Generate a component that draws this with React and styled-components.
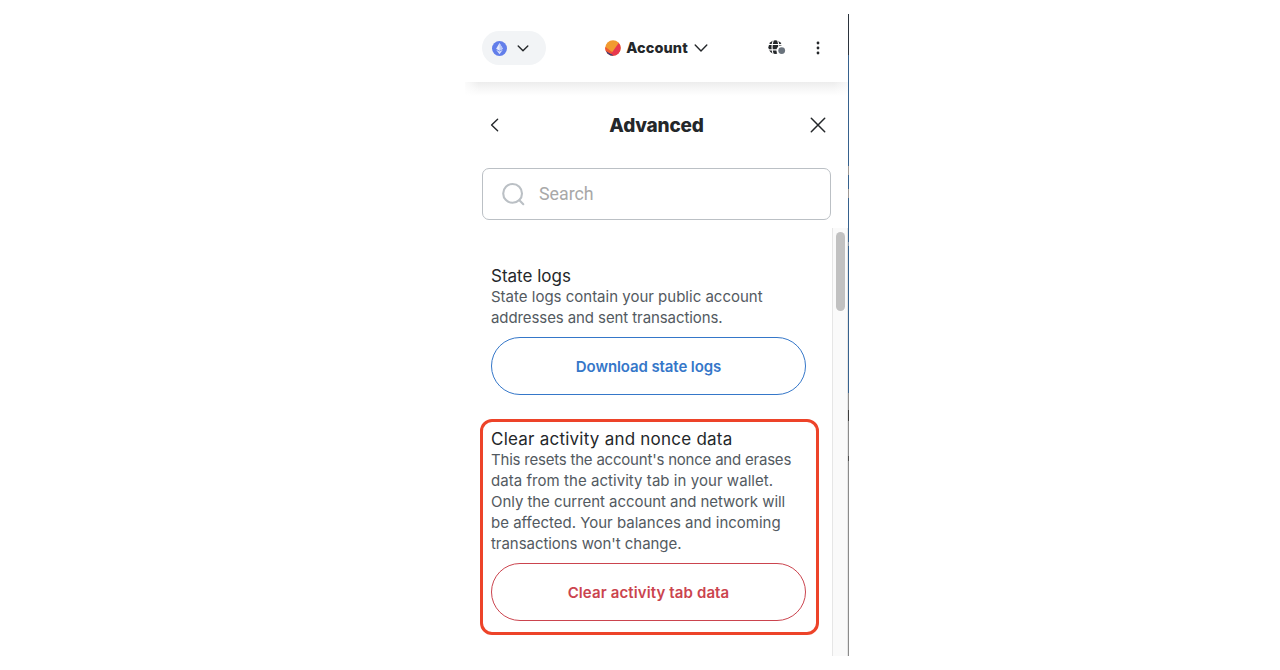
import React from "react";
import styled, { createGlobalStyle } from "styled-components";

const GlobalStyle = createGlobalStyle`
  *, *::before, *::after { box-sizing: border-box; }
  body { margin: 0; background: #fff; font-family: Inter, "Open Sans", sans-serif; color: #24272a; }
  button { font: inherit; color: inherit; background: none; border: 0; padding: 0; display: flex; }
  h1, h2, p { margin: 0; font-weight: 400; }
  svg { display: block; }
`;

const Page = styled.div`
  height: 670px;
  padding: 14px 0 14px 465px;
  overflow: hidden;
`;

const Popup = styled.main`
  display: grid;
  grid-template-columns: 383px 1px;
  height: 642px;
`;

const Wallet = styled.div`
  display: flex;
  flex-direction: column;
  min-height: 0;
`;

const DesktopEdge = styled.div`
  background: linear-gradient(#2b333d 0 41px, #36618d 41px 152px, #a09a96 152px 161px, #36618d 161px 175px, #a09a96 175px 184px, #36618d 184px 228px, #8998a8 228px 232px, #36618d 232px 379px, #8b8b8b 379px 396px, #3d3d3d 396px 407px, #8b8b8b 407px 442px, #4d4d4d 442px 447px, #8b8b8b 447px);
`;

const Header = styled.header`
  flex: none;
  height: 68px;
  padding: 0 17px;
  display: grid;
  grid-template-columns: 64px 1fr 64px;
  align-items: center;
`;

const HeaderShade = styled.div`
  flex: none;
  height: 14px;
  background: linear-gradient(90deg, #fffc 0, rgba(255, 255, 255, 0) 14px, rgba(255, 255, 255, 0) 368px, #fff9 383px), linear-gradient(#ededed, #f7f7f7 50%, #fff);
`;

const NetworkPill = styled.button`
  && {
    width: 64px;
    height: 34px;
    border-radius: 17px;
    background: #f2f4f6;
    align-items: center;
    padding-left: 10px;
    gap: 10px;
  }
`;

const AccountPicker = styled.button`
  && {
    justify-self: center;
    align-items: center;
    gap: 5px;
  }
`;

const AccountName = styled.span`
  font-size: 14.5px;
  line-height: 20px;
  font-weight: 800;
  letter-spacing: 0.1px;
  margin-right: 1px;
`;

const HeaderTools = styled.div`
  display: flex;
  align-items: center;
  justify-content: flex-end;
  gap: 30px;
  padding-right: 11px;
`;

const TitleBar = styled.div`
  flex: none;
  height: 58px;
  padding: 0 22px 0 25px;
  display: flex;
  align-items: center;
  justify-content: space-between;
`;

const Title = styled.h1`
  font-size: 19px;
  line-height: 26px;
  font-weight: 800;
  letter-spacing: -0.2px;
  padding: 2px 0 0 4px;
`;

const SearchBox = styled.label`
  flex: none;
  height: 52px;
  margin: 14px 17px 8px;
  border: 1px solid #bbc0c5;
  border-radius: 7px;
  display: flex;
  align-items: center;
  padding-left: 18px;
  gap: 13px;
`;

const SearchInput = styled.input`
  border: 0;
  outline: 0;
  padding: 0;
  width: 250px;
  background: none;
  font: 400 17.8px/24px Roboto, sans-serif;
  &::placeholder { color: #a8a8a8; opacity: 1; }
`;

const Scroller = styled.div`
  flex: 1;
  min-height: 0;
  display: grid;
  grid-template-columns: 1fr 16px;
`;

const Settings = styled.div`
  padding: 28px 13px 0 15px;
`;

const Track = styled.div`
  background: #fafafa;
  border-left: 1px solid #e6e6e6;
  border-right: 1px solid #e6e6e6;
  padding: 4px 3px 0;
`;

const Thumb = styled.div`
  height: 79px;
  width: 9px;
  border-radius: 5px;
  background: #c1c1c1;
`;

const Section = styled.section`
  border: 3px solid ${(p) => (p.$highlight ? "#ed4329" : "transparent")};
  border-radius: 12px;
  padding: 7px 10px 11px 8px;
  & + & { margin-top: 10px; }
`;

const SectionTitle = styled.h2`
  font-size: 17px;
  line-height: 20px;
  letter-spacing: ${(p) => p.$track}px;
  white-space: nowrap;
`;

const Description = styled.p`
  font-size: 15px;
  line-height: 21px;
  color: #535a61;
  margin-bottom: 9px;
`;

const Line = styled.span`
  display: block;
  white-space: nowrap;
  letter-spacing: ${(p) => p.$track}px;
`;

const OutlineButton = styled.button`
  && {
    width: 315px;
    height: 58px;
    border: 1px solid ${(p) => p.$color};
    border-radius: 29px;
    color: ${(p) => p.$color};
    font-size: 15px;
    font-weight: 600;
    letter-spacing: ${(p) => p.$track}px;
    align-items: center;
    justify-content: center;
  }
`;

const Chevron = ({ w = 14, h = 8, d = "m1.2 1 5.8 6 5.8-6" }) => (
  <svg width={w} height={h} viewBox={`0 0 ${w} ${h}`} fill="none" stroke="#24272a" strokeWidth="1.4" strokeLinecap="round" strokeLinejoin="round">
    <path d={d} />
  </svg>
);

const Ether = () => (
  <svg width="15" height="15" viewBox="0 0 15 15">
    <circle cx="7.5" cy="7.5" r="7.5" fill="#627eea" />
    <path d="M7.5 2 4.1 7.8l3.4 2 3.4-2z" fill="#e6ebfc" />
    <path d="M7.5 2v7.8l3.4-2z" fill="#b9c6f7" />
    <path d="m4.1 8.7 3.4 4.5 3.4-4.5-3.4 1.9z" fill="#d9e0fb" />
  </svg>
);

const Avatar = () => (
  <svg width="16" height="16" viewBox="0 0 16 16">
    <defs><clipPath id="avatar"><circle cx="8" cy="8" r="7.7" /></clipPath></defs>
    <g clipPath="url(#avatar)">
      <path fill="#f19a2f" d="M0 0h16v16H0z" />
      <path fill="#e8384e" d="M0 7.4 7.2 12.2 14 2.6 16 3v13H0z" />
      <path fill="#34427c" d="M0 10.5 6.5 14.2 8.5 16H0z" />
      <path fill="#f05a30" d="M0 6.5 7.2 12.2 5.8 13.8 0 10.5z" />
    </g>
  </svg>
);

const Globe = () => (
  <svg width="18" height="16" viewBox="0 0 18 16">
    <circle cx="7.3" cy="7.2" r="6.9" fill="#24272a" />
    <path d="M0 4.5h15M0 9.9h15M5.3 0c-1.6 4.5-1.6 10 0 15M9.6 0c1.6 4.5 1.6 10 0 15" fill="none" stroke="#fff" strokeWidth="1.1" />
    <circle cx="13.7" cy="10.6" r="5.3" fill="#fff" />
    <circle cx="13.7" cy="10.6" r="3.4" fill="#6a737d" />
  </svg>
);

const Dots = () => (
  <svg width="4" height="14" viewBox="0 0 4 14" fill="#24272a">
    <circle cx="2" cy="2" r="1.4" /><circle cx="2" cy="7" r="1.4" /><circle cx="2" cy="12" r="1.4" />
  </svg>
);

const Close = () => (
  <svg width="16" height="16" viewBox="0 0 16 16" stroke="#24272a" strokeWidth="1.5" strokeLinecap="round">
    <path d="m1.3 1.3 13.4 13.4M14.7 1.3 1.3 14.7" />
  </svg>
);

const Magnifier = () => (
  <svg width="25" height="25" viewBox="0 0 25 25" fill="none" stroke="#bbc0c5" strokeWidth="2.1" strokeLinecap="round">
    <circle cx="11.6" cy="11.4" r="9.4" /><path d="m18.4 18.2 3.9 4" />
  </svg>
);

const stateLogs = [
  ["State logs contain your public account", 0],
  ["addresses and sent transactions.", -0.09],
];

const clearActivity = [
  ["This resets the account's nonce and erases", -0.21],
  ["data from the activity tab in your wallet.", 0.05],
  ["Only the current account and network will", -0.05],
  ["be affected. Your balances and incoming", 0],
  ["transactions won't change.", -0.05],
];

const Lines = ({ items }) => (
  <Description>
    {items.map(([text, track]) => <Line key={text} $track={track}>{text}</Line>)}
  </Description>
);

export default function App() {
  return (
    <>
      <GlobalStyle />
      <Page>
        <Popup>
          <Wallet>
            <Header>
              <NetworkPill aria-label="Network"><Ether /><Chevron w={12} h={7} d="m1.2 1 4.8 4.8L10.8 1" /></NetworkPill>
              <AccountPicker><Avatar /><AccountName>Account</AccountName><Chevron /></AccountPicker>
              <HeaderTools><Globe /><Dots /></HeaderTools>
            </Header>
            <HeaderShade />
            <TitleBar>
              <Chevron w={9} h={14} d="M7.6 1.2 1.6 7l6 5.8" />
              <Title>Advanced</Title>
              <Close />
            </TitleBar>
            <SearchBox><Magnifier /><SearchInput placeholder="Search" /></SearchBox>
            <Scroller>
              <Settings>
                <Section>
                  <SectionTitle $track={0}>State logs</SectionTitle>
                  <Lines items={stateLogs} />
                  <OutlineButton $color="#3577c9" $track={-0.1}>Download state logs</OutlineButton>
                </Section>
                <Section $highlight>
                  <SectionTitle $track={0.23}>Clear activity and nonce data</SectionTitle>
                  <Lines items={clearActivity} />
                  <OutlineButton $color="#cb444e" $track={0.12}>Clear activity tab data</OutlineButton>
                </Section>
              </Settings>
              <Track><Thumb /></Track>
            </Scroller>
          </Wallet>
          <DesktopEdge />
        </Popup>
      </Page>
    </>
  );
}
